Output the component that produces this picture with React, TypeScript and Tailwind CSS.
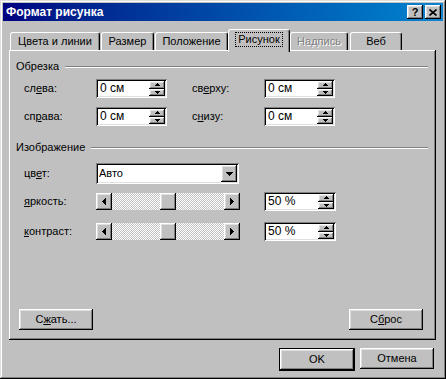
import React from "react";

const RAISED =
  "shadow-[inset_-1px_-1px_0_#000,inset_1px_1px_0_#fff,inset_-2px_-2px_0_#808080,inset_2px_2px_0_#dfdfdf]";
const SUNKEN =
  "shadow-[inset_1px_1px_0_#808080,inset_-1px_-1px_0_#fff,inset_2px_2px_0_#000,inset_-2px_-2px_0_#dfdfdf]";

function Tri({ dir, w, h }: { dir: "up" | "down" | "left" | "right"; w: number; h: number }) {
  const pts =
    dir === "up"
      ? `0,${h} ${w},${h} ${w / 2},0`
      : dir === "down"
      ? `0,0 ${w},0 ${w / 2},${h}`
      : dir === "left"
      ? `${w},0 ${w},${h} 0,${h / 2}`
      : `0,0 0,${h} ${w},${h / 2}`;
  return (
    <svg width={w} height={h} viewBox={`0 0 ${w} ${h}`} className="block">
      <polygon points={pts} fill="#000" shapeRendering="crispEdges" />
    </svg>
  );
}

function Spin({ value, w }: { value: string; w: string }) {
  return (
    <div className={`${w} h-[19px] bg-white ${SUNKEN} flex items-center pl-[4px] pr-[2px] py-[2px]`}>
      <span className="flex-1 text-[12px] leading-[13px] text-black">{value}</span>
      <div className="flex flex-col w-[16px] h-[15px]">
        <div className={`flex-1 bg-[#c0c0c0] ${RAISED} flex items-center justify-center`}>
          <Tri dir="up" w={5} h={3} />
        </div>
        <div className={`flex-1 bg-[#c0c0c0] ${RAISED} flex items-center justify-center`}>
          <Tri dir="down" w={5} h={3} />
        </div>
      </div>
    </div>
  );
}

function Label({ children, w = "w-[72px]" }: { children: React.ReactNode; w?: string }) {
  return <div className={`${w} shrink-0 text-black`}>{children}</div>;
}

function Header({ text }: { text: string }) {
  return (
    <div className="flex items-center gap-[6px] h-[13px]">
      <span className="text-black">{text}</span>
      <div className="flex-1 h-[2px] border-t border-t-[#808080] border-b border-b-white" />
    </div>
  );
}

function Scroll() {
  return (
    <div className="w-[144px] h-[17px] flex">
      <div className={`w-[16px] h-[17px] bg-[#c0c0c0] ${RAISED} flex items-center justify-center`}>
        <Tri dir="left" w={4} h={7} />
      </div>
      <div className="flex-1 bg-[image:repeating-conic-gradient(#fff_0_25%,#c0c0c0_0_50%)] bg-[length:2px_2px]" />
      <div className={`w-[16px] h-[17px] bg-[#c0c0c0] ${RAISED}`} />
      <div className="flex-1 bg-[image:repeating-conic-gradient(#fff_0_25%,#c0c0c0_0_50%)] bg-[length:2px_2px]" />
      <div className={`w-[16px] h-[17px] bg-[#c0c0c0] ${RAISED} flex items-center justify-center`}>
        <Tri dir="right" w={4} h={7} />
      </div>
    </div>
  );
}

function Btn({ children, className = "" }: { children: React.ReactNode; className?: string }) {
  return (
    <div
      className={`w-[74px] h-[21px] bg-[#c0c0c0] ${RAISED} flex items-center justify-center text-black ${className}`}
    >
      {children}
    </div>
  );
}

function Tab({
  text,
  w,
  ml,
  selected,
  disabled,
}: {
  text: string;
  w: string;
  ml: string;
  selected?: boolean;
  disabled?: boolean;
}) {
  return (
    <div
      className={`${w} ${ml} ${
        selected ? "h-[23px] -mb-[2px] relative z-10 pb-[3px]" : "h-[18px]"
      } bg-[#c0c0c0] border-t border-l border-white border-r border-r-black shadow-[inset_-1px_0_0_#808080] rounded-t-[3px] flex items-center justify-center`}
    >
      <span
        className={`${
          selected ? "outline outline-1 outline-dotted outline-black px-[2px] leading-[13px]" : ""
        } ${disabled ? "text-[#808080] [text-shadow:1px_1px_0_#fff]" : "text-black"}`}
      >
        {text}
      </span>
    </div>
  );
}

export default function App() {
  return (
    <div className="w-[446px] h-[379px] bg-[#c0c0c0] p-[3px] flex flex-col font-['Liberation_Sans',Arial,sans-serif] text-[11px] leading-[13px] shadow-[inset_-1px_-1px_0_#000,inset_1px_1px_0_#dfdfdf,inset_-2px_-2px_0_#808080,inset_2px_2px_0_#fff]">
      {/* Title bar */}
      <div className="h-[18px] shrink-0 bg-gradient-to-r from-[#000080] to-[#1084d0] flex items-center pl-[3px] pr-[2px]">
        <span className="flex-1 text-white font-bold text-[12px] leading-[14px]">Формат рисунка</span>
        <div className={`w-[16px] h-[14px] bg-[#c0c0c0] ${RAISED} flex items-center justify-center text-black font-bold text-[11px] leading-[11px]`}>
          ?
        </div>
        <div className={`ml-[2px] w-[16px] h-[14px] bg-[#c0c0c0] ${RAISED} flex items-center justify-center`}>
          <svg width="8" height="7" viewBox="0 0 8 7">
            <path d="M0.5 0.5 L7.5 6.5 M7.5 0.5 L0.5 6.5" stroke="#000" strokeWidth="1.6" />
          </svg>
        </div>
      </div>

      {/* Tabs */}
      <div className="mt-[8px] h-[21px] shrink-0 flex items-end relative z-10">
        <Tab text="Цвета и линии" w="w-[90px]" ml="ml-[7px]" />
        <Tab text="Размер" w="w-[53px]" ml="ml-[1px]" />
        <Tab text="Положение" w="w-[73px]" ml="ml-[1px]" />
        <Tab text="Рисунок" w="w-[62px]" ml="ml-[0px]" selected />
        <Tab text="Надпись" w="w-[58px]" ml="ml-[0px]" disabled />
        <Tab text="Веб" w="w-[52px]" ml="ml-[2px]" />
      </div>

      {/* Panel */}
      <div className="ml-[6px] w-[427px] h-[290px] shrink-0 bg-[#c0c0c0] shadow-[inset_-1px_-1px_0_#000,inset_1px_1px_0_#fff,inset_-2px_-2px_0_#808080] pt-[10px] pl-[7px] pr-[8px] pb-[10px] flex flex-col">
        <Header text="Обрезка" />
        <div className="mt-[6px] ml-[8px] flex items-center">
          <Label>
            сл<u>е</u>ва:
          </Label>
          <Spin value="0 см" w="w-[71px]" />
          <div className="w-[25px]" />
          <Label>
            св<u>е</u>рху:
          </Label>
          <Spin value="0 см" w="w-[71px]" />
        </div>
        <div className="mt-[9px] ml-[8px] flex items-center">
          <Label>
            сп<u>р</u>ава:
          </Label>
          <Spin value="0 см" w="w-[71px]" />
          <div className="w-[25px]" />
          <Label>
            с<u>н</u>изу:
          </Label>
          <Spin value="0 см" w="w-[71px]" />
        </div>

        <div className="mt-[15px]">
          <Header text="Изображение" />
        </div>
        <div className="mt-[9px] ml-[8px] flex items-center">
          <Label>
            цв<u>е</u>т:
          </Label>
          <div className={`w-[143px] h-[21px] bg-white ${SUNKEN} flex items-center pl-[3px] pr-[2px] py-[2px]`}>
            <span className="flex-1 text-black">Авто</span>
            <div className={`w-[16px] h-[17px] bg-[#c0c0c0] ${RAISED} flex items-center justify-center`}>
              <Tri dir="down" w={7} h={4} />
            </div>
          </div>
        </div>
        <div className="mt-[8px] ml-[8px] flex items-center h-[19px]">
          <Label>
            <u>я</u>ркость:
          </Label>
          <Scroll />
          <div className="w-[24px]" />
          <Spin value="50 %" w="w-[72px]" />
        </div>
        <div className="mt-[11px] ml-[8px] flex items-center h-[19px]">
          <Label>
            <u>к</u>онтраст:
          </Label>
          <Scroll />
          <div className="w-[24px]" />
          <Spin value="50 %" w="w-[72px]" />
        </div>

        <div className="mt-auto flex justify-between pl-[3px] pr-[5px]">
          <Btn>
            С<u>ж</u>ать...
          </Btn>
          <Btn>
            С<u>б</u>рос
          </Btn>
        </div>
      </div>

      {/* Bottom buttons */}
      <div className="mt-[8px] flex justify-end pr-[9px] gap-[5px]">
        <div className="border border-black">
          <Btn className="w-[72px] h-[19px]">OK</Btn>
        </div>
        <Btn className="w-[73px]">Отмена</Btn>
      </div>
    </div>
  );
}
